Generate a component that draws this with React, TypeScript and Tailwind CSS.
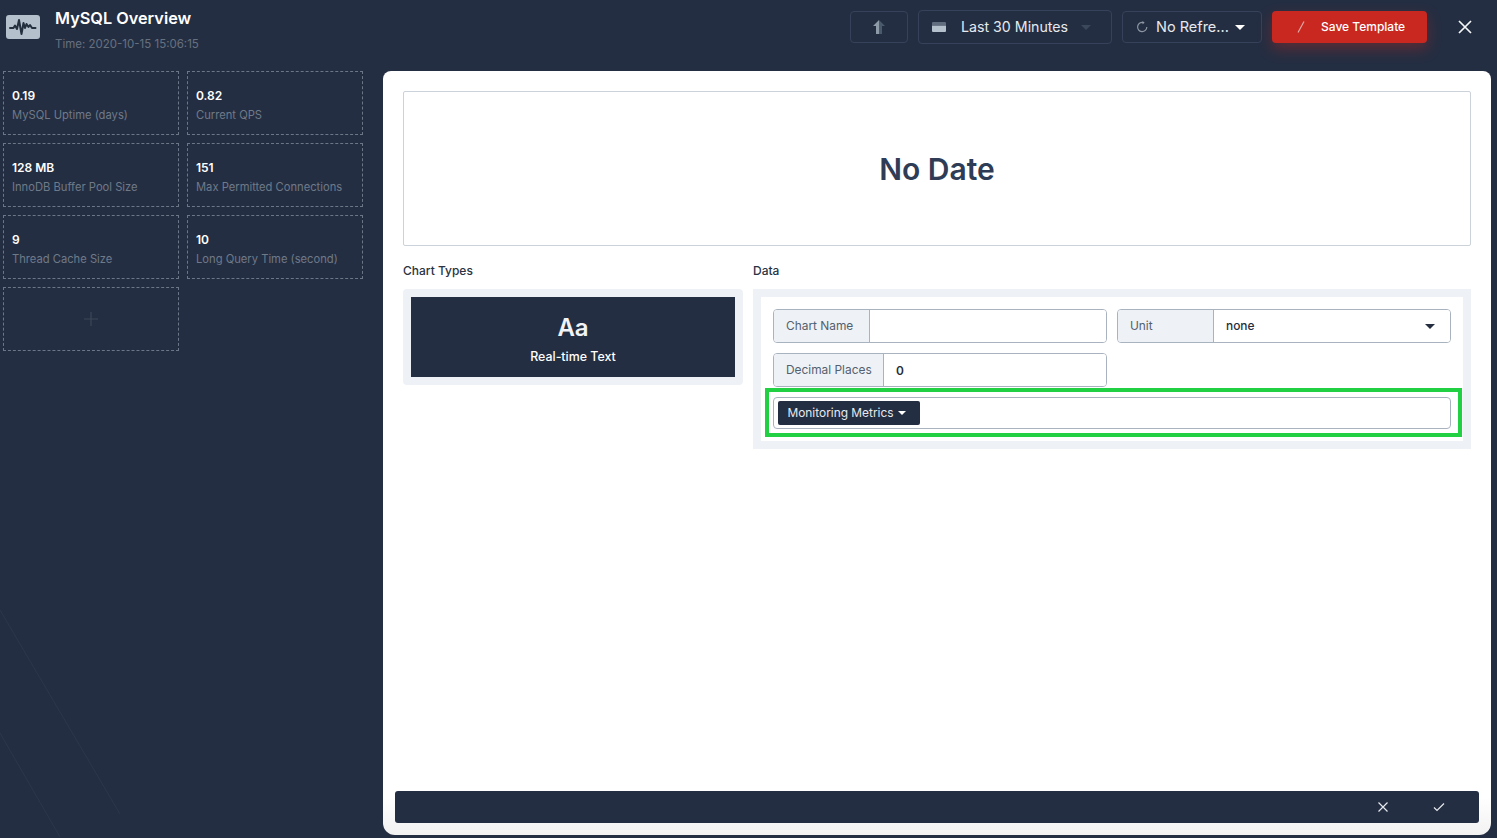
import { useState } from "react";

const STATS = [
  { value: "0.19", label: "MySQL Uptime (days)" },
  { value: "0.82", label: "Current QPS" },
  { value: "128 MB", label: "InnoDB Buffer Pool Size" },
  { value: "151", label: "Max Permitted Connections" },
  { value: "9", label: "Thread Cache Size" },
  { value: "10", label: "Long Query Time (second)" },
];

function Caret({ className }: { className: string }) {
  return (
    <svg viewBox="0 0 10 5" className={className} fill="currentColor">
      <path d="M0 0h10L5 5z" />
    </svg>
  );
}

function Logo() {
  return (
    <div className="flex h-6 w-[34px] items-center justify-center rounded-[3px] bg-[#b4c0cc]">
      <svg viewBox="0 0 28 18" className="h-[18px] w-7" fill="none" stroke="#25303f" strokeWidth="2" strokeLinecap="round" strokeLinejoin="round">
        <path d="M1 10h3.5l1.5-2.5L8 11l2-9 2.5 14 2-11 1.5 5 1.5-4 2 3 1.5-2 2 3h3.5" />
      </svg>
    </div>
  );
}

function StatCard({ value, label }: { value: string; label: string }) {
  return (
    <div className="flex h-16 flex-col justify-center border border-dashed border-[#6b7686] pl-2 pt-[3px]">
      <div className="text-[12px] leading-5 font-semibold text-white">{value}</div>
      <div className="text-[11.2px] leading-[18px] text-[#6f7a89]">{label}</div>
    </div>
  );
}

function InputGroup({ label, labelWidth, children }: { label: string; labelWidth: string; children?: React.ReactNode }) {
  return (
    <div className="flex h-[34px] overflow-hidden rounded border border-[#a9b3c0]">
      <div className={`flex shrink-0 items-center border-r border-[#a9b3c0] bg-[#eef2f6] pl-3 text-[11.9px] text-[#55606e] ${labelWidth}`}>
        {label}
      </div>
      <div className="flex flex-1 items-center bg-white pl-3 pr-[15px] text-[11.9px] font-medium text-[#252e40]">{children}</div>
    </div>
  );
}

export default function App() {
  const [chartName, setChartName] = useState("");

  return (
    <div className="relative h-[838px] w-[1497px] overflow-hidden bg-[#242e42] font-['Inter',sans-serif]">
      {/* faint diagonal lines in the corner of the background */}
      <svg className="absolute bottom-0 left-0 h-[230px] w-[130px]" viewBox="0 0 130 230" fill="none" stroke="#2a374c" strokeWidth="1">
        <path d="M0 2L120 206" />
        <path d="M0 125L60 229" />
      </svg>

      {/* header */}
      <header className="relative flex h-[71px] items-start">
        <div className="mt-[15px] ml-1.5">
          <Logo />
        </div>
        <div className="ml-[15px] mt-[7px]">
          <h1 className="text-[16.3px] leading-[22px] font-semibold text-white">MySQL Overview</h1>
          <p className="mt-[5px] text-[11.5px] leading-5 text-[#667180]">Time: 2020-10-15 15:06:15</p>
        </div>

        <div className="ml-auto mr-6 mt-[10px] flex items-center">
          <button className="flex h-8 w-[58px] items-center justify-center rounded border border-[#36425a]">
            <svg viewBox="0 0 12 14" className="h-[14px] w-3">
              <path d="M6 0L0 6h3v8h3z" fill="#8d9aa8" />
              <path d="M6 0l6 6H9v8H6z" fill="#4a5a6c" />
            </svg>
          </button>
          <button className="ml-2.5 flex h-[34px] w-[194px] items-center rounded border border-[#36425a] pl-[13px] text-[14.2px] text-[#e6e9ee]">
            <svg viewBox="0 0 14 10" className="h-2.5 w-3.5" fill="#b4c0cc">
              <path d="M1 0h12a1 1 0 0 1 1 1v2H0V1a1 1 0 0 1 1-1z" fill="#5f6d7e" />
              <path d="M0 3.5h14V9a1 1 0 0 1-1 1H1a1 1 0 0 1-1-1z" />
            </svg>
            <span className="ml-[15px] pb-px">Last 30 Minutes</span>
            <Caret className="ml-[13px] h-[5px] w-2.5 text-[#3b475a]" />
          </button>
          <button className="ml-2.5 flex h-8 w-[140px] items-center rounded border border-[#36425a] pl-[13px] text-[14.5px] text-[#e6e9ee]">
            <svg viewBox="0 0 12 12" className="h-3 w-3" fill="none" stroke="#8d96a3" strokeWidth="1.2">
              <path d="M7.5 1.6A4.6 4.6 0 1 0 10.8 6" />
              <path d="M6.5 0l2.2 1.7-2.2 1.5" fill="#8d96a3" stroke="none" />
            </svg>
            <span className="ml-2 pb-px">No Refre...</span>
            <Caret className="ml-1.5 h-[5px] w-2.5 text-white" />
          </button>
          <button className="ml-2.5 flex h-8 w-[155px] items-center rounded bg-[#c82820] pl-[23px] text-[12px] font-medium text-white shadow-[0_6px_14px_rgba(200,40,32,0.35)]">
            <svg viewBox="0 0 10 14" className="h-3.5 w-2.5" stroke="#e0a9a6" strokeWidth="1.2">
              <path d="M9 1.5L3 12.5" />
            </svg>
            <span className="ml-4">Save Template</span>
          </button>
          <button className="ml-[30px] flex h-4 w-4 items-center justify-center">
            <svg viewBox="0 0 14 14" className="h-[14px] w-[14px]" stroke="#f3f5f7" strokeWidth="1.7">
              <path d="M1 1l12 12M13 1L1 13" />
            </svg>
          </button>
        </div>
      </header>

      <div className="relative flex items-start">
        {/* stats sidebar */}
        <aside className="ml-[3px] grid w-[360px] grid-cols-2 gap-2">
          {STATS.map((s) => (
            <StatCard key={s.label} value={s.value} label={s.label} />
          ))}
          <div className="flex h-16 items-center justify-center border border-dashed border-[#6b7686]">
            <svg viewBox="0 0 14 14" className="h-[14px] w-[14px]" stroke="#3a4859" strokeWidth="1.2">
              <path d="M7 0v14M0 7h14" />
            </svg>
          </div>
        </aside>

        {/* main panel */}
        <main className="ml-5 flex h-[764px] w-[1108px] flex-col rounded-t-lg rounded-b-xl bg-gradient-to-b from-white from-95% to-[#f2f2f3] px-5 pt-5">
          <div className="flex h-[155px] items-center justify-center rounded-[2px] border border-[#ccd2da] pt-0.5 text-[30px] font-semibold text-[#2f3c55]">
            No Date
          </div>

          <div className="mt-[17px] flex gap-2.5">
            <section className="w-[340px]">
              <h2 className="text-[12px] leading-4 font-medium text-[#2a3342]">Chart Types</h2>
              <div className="mt-[10px] rounded bg-[#eef2f6] p-2">
                <div className="flex h-20 flex-col items-center bg-[#242e42] pt-4 text-white">
                  <span className="text-[24px] leading-[30px] font-semibold text-[#f1f3f6]">Aa</span>
                  <span className="mt-1.5 text-[12.4px] leading-4 font-medium">Real-time Text</span>
                </div>
              </div>
            </section>

            <section className="w-[718px]">
              <h2 className="text-[12px] leading-4 font-medium text-[#2a3342]">Data</h2>
              <div className="mt-[10px] bg-[#eef2f6] p-2">
                <div className="relative h-36 bg-white px-3 pt-3">
                  <div className="grid w-[678px] grid-cols-2 gap-x-2.5 gap-y-2.5">
                    <InputGroup label="Chart Name" labelWidth="w-24">
                      <input
                        value={chartName}
                        onChange={(e) => setChartName(e.target.value)}
                        className="w-full outline-none"
                      />
                    </InputGroup>
                    <InputGroup label="Unit" labelWidth="w-24">
                      <span className="flex-1">none</span>
                      <Caret className="h-[5px] w-2.5 text-[#252e40]" />
                    </InputGroup>
                    <InputGroup label="Decimal Places" labelWidth="w-[110px]">
                      <span className="pt-px font-semibold">0</span>
                    </InputGroup>
                  </div>
                  <div className="mt-2.5 flex h-8 w-[678px] items-center rounded border border-[#a9b3c0] pl-1">
                    <button className="flex h-6 w-[142px] items-center justify-center rounded-[2px] bg-[#242e42] pr-1 text-[11.9px] text-[#e6e9ee]">
                      Monitoring Metrics
                      <Caret className="ml-[3px] h-1 w-2.5 text-white" />
                    </button>
                  </div>
                  {/* green highlight marker over the metrics row */}
                  <div className="absolute top-[91px] left-1 h-[49px] w-[697px] border-4 border-[#22d044]" />
                </div>
              </div>
            </section>
          </div>

          <div className="mt-auto mb-3 -mx-2 flex h-8 items-center justify-end rounded-[3px] bg-[#242e42] pr-[34px]">
            <svg viewBox="0 0 10 10" className="h-2.5 w-2.5" stroke="#e6e9ee" strokeWidth="1.2">
              <path d="M0.5 0.5l9 9M9.5 0.5l-9 9" />
            </svg>
            <svg viewBox="0 0 12 10" className="ml-[45px] h-2.5 w-3" fill="none" stroke="#e6e9ee" strokeWidth="1.2">
              <path d="M1 5.5l3 3L11 1.5" />
            </svg>
          </div>
        </main>
      </div>
    </div>
  );
}
